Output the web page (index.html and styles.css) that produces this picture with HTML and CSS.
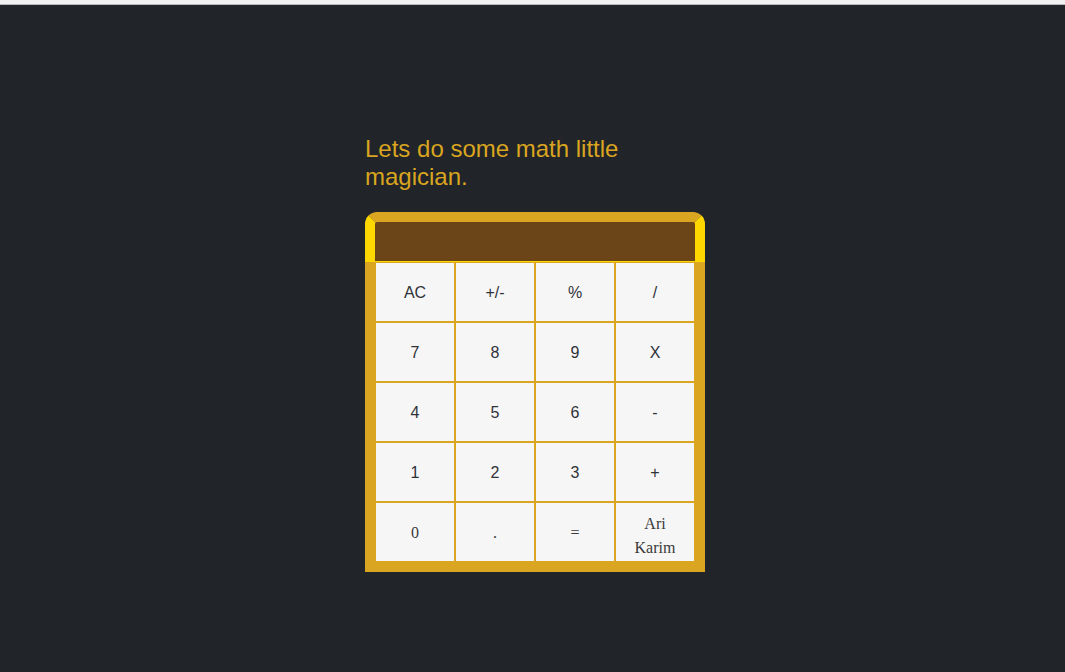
FILE: index.html
```html
<!DOCTYPE html>
<html lang="en">
<head>
<meta charset="utf-8">
<title>Calculator</title>
<link rel="stylesheet" href="styles.css">
</head>
<body>
<div class="topbar"></div>
<main class="page">
  <div class="app">
    <h2 class="title">Lets do some math little magician.</h2>
    <div class="calc">
      <div class="display"></div>
      <div class="keys">
        <button class="key">AC</button>
        <button class="key">+/-</button>
        <button class="key">%</button>
        <button class="key">/</button>
        <button class="key">7</button>
        <button class="key">8</button>
        <button class="key">9</button>
        <button class="key">X</button>
        <button class="key">4</button>
        <button class="key">5</button>
        <button class="key">6</button>
        <button class="key">-</button>
        <button class="key">1</button>
        <button class="key">2</button>
        <button class="key">3</button>
        <button class="key">+</button>
        <div class="key serif">0</div>
        <div class="key serif">.</div>
        <div class="key serif">=</div>
        <div class="key serif name">Ari<br>Karim</div>
      </div>
    </div>
  </div>
</main>
</body>
</html>
```

FILE: styles.css
```css
html, body {
  margin: 0;
  padding: 0;
  background: #212428;
  height: 100%;
}

body {
  font-family: "Liberation Sans", Arial, sans-serif;
}

.topbar {
  height: 4px;
  background: #f1f1f1;
  border-bottom: 1px solid #b9b9b9;
}

.page {
  display: flex;
  justify-content: center;
  padding: 130px 0 0 5px;
}

.app {
  width: 340px;
  display: flex;
  flex-direction: column;
}

.title {
  margin: 0 0 21px;
  font-size: 24px;
  font-weight: normal;
  line-height: 28px;
  color: #daa520;
}

.calc {
  width: 340px;
  display: flex;
  flex-direction: column;
}

.display {
  box-sizing: border-box;
  height: 50px;
  border-style: solid;
  border-width: 10px 10px 1px 10px;
  border-color: #daa520 #ffd700 #ffd700 #ffd700;
  border-radius: 12px 12px 0 0;
  background: #6b4418;
}

.keys {
  background: #daa520;
  padding: 0 10px 10px;
  display: grid;
  grid-template-columns: repeat(4, 80px);
  grid-auto-rows: 60px;
}

.key {
  box-sizing: border-box;
  margin: 0;
  padding: 2px 0 0;
  border: 1px solid #daa520;
  border-radius: 0;
  background: #f6f6f6;
  color: #2f3238;
  font-family: "Liberation Sans", Arial, sans-serif;
  font-size: 16px;
  display: flex;
  align-items: center;
  justify-content: center;
  text-align: center;
}

.serif {
  font-family: "Liberation Serif", "Times New Roman", serif;
  color: #3a3a3a;
}

.name {
  line-height: 24px;
  padding-top: 8px;
}
```
